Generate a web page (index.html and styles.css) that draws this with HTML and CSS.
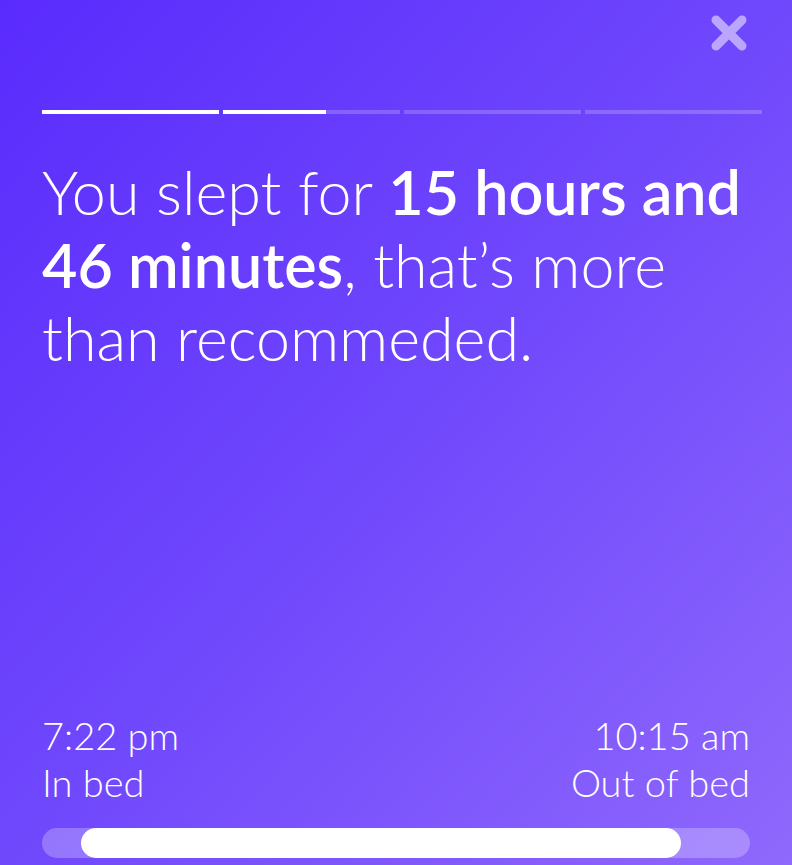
FILE: index.html
```html
<!DOCTYPE html>
<html lang="en">
<head>
<meta charset="utf-8">
<title>Sleep summary</title>
<link rel="stylesheet" href="styles.css">
</head>
<body>
<main class="screen">
  <header class="top">
    <button class="close" aria-label="Close">
      <svg width="36" height="36" viewBox="0 0 36 36" aria-hidden="true">
        <path d="M5 5 L31 31 M31 5 L5 31" stroke="currentColor" stroke-width="9" stroke-linecap="round" fill="none"/>
      </svg>
    </button>
  </header>
  <div class="progress">
    <div class="seg"><div class="fill" style="width:100%"></div></div>
    <div class="seg"><div class="fill" style="width:58%"></div></div>
    <div class="seg"></div>
    <div class="seg"></div>
  </div>
  <h1 class="headline">You slept for <strong>15 hours and 46 minutes</strong>, that’s more than recommeded.</h1>
  <div class="spacer"></div>
  <section class="times">
    <div class="time left">
      <div class="clock">7:22 pm</div>
      <div class="label">In bed</div>
    </div>
    <div class="time right">
      <div class="clock">10:15 am</div>
      <div class="label">Out of bed</div>
    </div>
  </section>
  <div class="track"><div class="range" style="margin-left:39px;width:600px"></div></div>
</main>
</body>
</html>
```

FILE: styles.css
```css
html, body {
  margin: 0;
  padding: 0;
}
body {
  width: 792px;
  height: 865px;
  overflow: hidden;
  background: linear-gradient(to bottom right, #5a2bfd 0%, #7048fc 50%, #8f68fc 100%);
  font-family: Lato, "Open Sans", sans-serif;
  color: #ffffff;
}
.screen {
  box-sizing: border-box;
  height: 865px;
  display: flex;
  flex-direction: column;
  padding: 0 30px 7px 42px;
}
.top {
  display: flex;
  justify-content: flex-end;
  padding-top: 15px;
  height: 95px;
  box-sizing: border-box;
}
.close {
  width: 36px;
  height: 36px;
  padding: 0;
  border: 0;
  background: none;
  color: #bba6fd;
  margin-right: 15px;
  cursor: pointer;
}
.close svg { display: block; }
.progress {
  display: flex;
  gap: 4px;
  margin-top: 15px;
  height: 4px;
}
.seg {
  flex: 1;
  height: 4px;
  background: rgba(255, 255, 255, 0.2);
}
.fill {
  height: 100%;
  background: #ffffff;
}
.headline {
  margin: 41px 0 0;
  font-size: 61px;
  font-weight: 300;
  line-height: 73px;
  letter-spacing: 0;
}
.headline strong {
  font-weight: 600;
}
.spacer { flex: 1; }
.times {
  display: flex;
  justify-content: space-between;
  margin-right: 12px;
  font-size: 38px;
  font-weight: 300;
  line-height: 47px;
}
.right { text-align: right; }
.track {
  margin-top: 22px;
  margin-right: 12px;
  height: 30px;
  border-radius: 15px;
  background: rgba(255, 255, 255, 0.25);
  display: flex;
}
.range {
  height: 30px;
  border-radius: 15px;
  background: #ffffff;
}
```
